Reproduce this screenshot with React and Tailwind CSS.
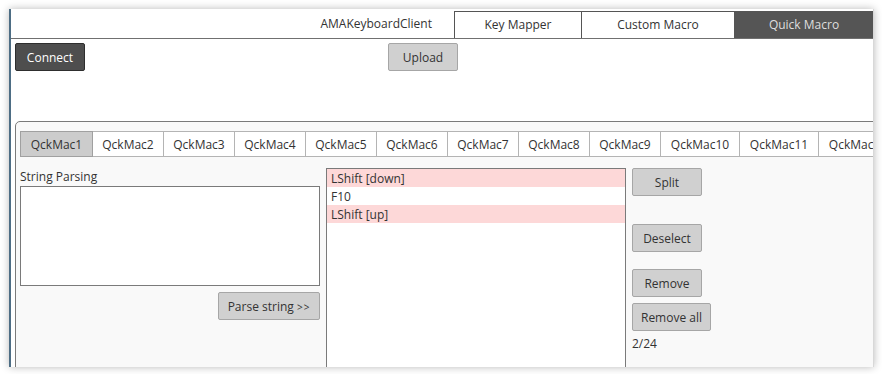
import React from "react";

const font = { fontFamily: '"Open Sans", "Noto Sans", sans-serif' };

const macroTabs = [
  { label: "QckMac1", w: "w-[73px] border-l", active: true },
  { label: "QckMac2", w: "w-[71px]" },
  { label: "QckMac3", w: "w-[71px]" },
  { label: "QckMac4", w: "w-[71px]" },
  { label: "QckMac5", w: "w-[71px]" },
  { label: "QckMac6", w: "w-[71px]" },
  { label: "QckMac7", w: "w-[71px]" },
  { label: "QckMac8", w: "w-[71px]" },
  { label: "QckMac9", w: "w-[71px]" },
  { label: "QckMac10", w: "w-[79px]" },
  { label: "QckMac11", w: "w-[79px]" },
  { label: "QckMac12", w: "w-[79px]" },
];

const steps = [
  { text: "LShift [down]", hl: true },
  { text: "F10", hl: false },
  { text: "LShift [up]", hl: true },
];

function GrayButton({ children, className = "" }) {
  return (
    <button
      className={`h-[28px] pt-[1px] rounded-[2px] border border-[#a6a6a6] bg-[#d0d0d0] text-[12px] text-[#333] ${className}`}
    >
      {children}
    </button>
  );
}

export default function App() {
  return (
    <div
      className="w-[882px] h-[374px] bg-white pl-[9px] pt-[9px] overflow-hidden"
      style={font}
    >
      {/* window */}
      <div className="w-[865px] h-[358px] flex flex-col overflow-hidden bg-white border-l-2 border-l-[#4d6d84] border-r border-r-[#d8d8d8] shadow-[0_0_8px_rgba(0,0,0,0.28)]">
        {/* header */}
        <div className="h-[30px] shrink-0 flex items-end justify-end border-b border-[#707070]">
          <div className="h-[29px] flex items-center mr-[22px] text-[12px] text-[#333]">
            AMAKeyboardClient
          </div>
          <div className="flex h-[27px]">
            <div className="w-[128px] flex items-center justify-center border border-b-0 border-[#555] text-[12px] text-[#333] bg-white">
              Key Mapper
            </div>
            <div className="w-[153px] flex items-center justify-center border border-l-0 border-b-0 border-[#555] text-[12px] text-[#333] bg-white">
              Custom Macro
            </div>
            <div className="w-[138px] flex items-center justify-center bg-[#555555] text-[12px] text-[#dedede]">
              Quick Macro
            </div>
          </div>
        </div>

        {/* body */}
        <div className="flex-1 min-h-0 px-[4px] pt-[4px]">
          <div className="flex items-start">
            <button className="w-[70px] h-[28px] pt-[1px] rounded-[2px] border border-[#2e2e2e] bg-[#4e4e4e] text-[12px] text-white">
              Connect
            </button>
            <GrayButton className="w-[70px] h-[27px] ml-[303px]">Upload</GrayButton>
          </div>

          {/* quick macro group */}
          <div className="mt-[50px] w-[900px] h-[260px] rounded-tl-[5px] border border-[#7a7a7a] bg-[#f9f9f9] pl-[4px] pt-[9px]">
            <div className="flex h-[26px]">
              {macroTabs.map((t) => (
                <div
                  key={t.label}
                  className={`${t.w} shrink-0 flex items-center justify-center pt-[1px] border-y border-r text-[12px] text-[#333] ${
                    t.active
                      ? "bg-[#cccccc] border-[#a0a0a0]"
                      : "bg-white border-[#b4b4b4]"
                  }`}
                >
                  {t.label}
                </div>
              ))}
            </div>

            <div className="flex gap-[6px] pt-[11px]">
              {/* string parsing */}
              <div className="w-[300px] flex flex-col">
                <div className="h-[18px] text-[12px] text-[#333] leading-[18px]">
                  String Parsing
                </div>
                <div className="h-[100px] border border-[#7a7a7a] bg-white" />
                <GrayButton className="self-end w-[102px] mt-[6px]">
                  Parse string <span className="text-[10px] tracking-[1px]">&gt;&gt;</span>
                </GrayButton>
              </div>

              {/* step list */}
              <div className="w-[300px] h-[220px] border border-[#7a7a7a] bg-white">
                {steps.map((s, i) => (
                  <div
                    key={i}
                    className={`h-[18px] pl-[4px] text-[12px] leading-[19px] text-[#333] ${
                      s.hl ? "bg-[#fdd8d8]" : ""
                    }`}
                  >
                    {s.text}
                  </div>
                ))}
              </div>

              {/* actions */}
              <div className="flex flex-col items-start">
                <GrayButton className="w-[70px]">Split</GrayButton>
                <GrayButton className="w-[70px] mt-[28px]">Deselect</GrayButton>
                <GrayButton className="w-[70px] mt-[17px]">Remove</GrayButton>
                <GrayButton className="w-[79px] mt-[6px]">Remove all</GrayButton>
                <div className="mt-[4px] text-[12px] text-[#333] leading-[18px]">2/24</div>
              </div>
            </div>
          </div>
        </div>
      </div>
    </div>
  );
}
